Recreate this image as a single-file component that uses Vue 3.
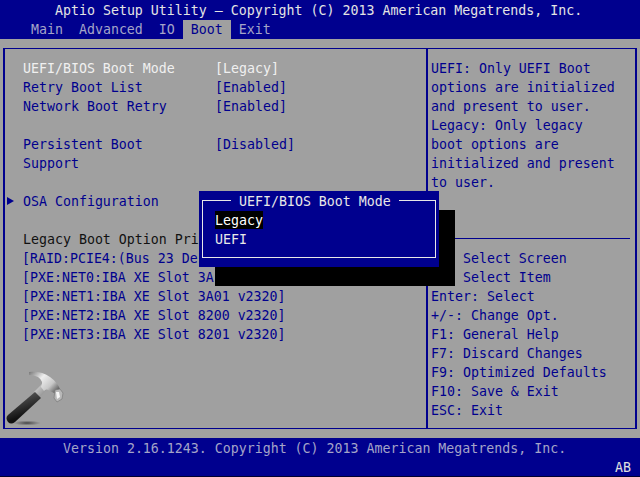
<script setup>
const tabs = ['Main', 'Advanced', 'IO', 'Boot', 'Exit']
const help = ['UEFI: Only UEFI Boot', 'options are initialized', 'and present to user.', 'Legacy: Only legacy', 'boot options are', 'initialized and present', 'to user.']
const keys = ['    Select Screen', '    Select Item', 'Enter: Select', '+/-: Change Opt.', 'F1: General Help', 'F7: Discard Changes', 'F9: Optimized Defaults', 'F10: Save & Exit', 'ESC: Exit']
const opts = ['[RAID:PCIE4:(Bus 23 De', '[PXE:NET0:IBA XE Slot 3A', '[PXE:NET1:IBA XE Slot 3A01 v2320]', '[PXE:NET2:IBA XE Slot 8200 v2320]', '[PXE:NET3:IBA XE Slot 8201 v2320]']
</script>

<template>
  <div class="screen">
    <header class="top">
      <div class="title">Aptio Setup Utility – Copyright (C) 2013 American Megatrends, Inc.</div>
      <nav class="tabs">
        <span v-for="t in tabs" :key="t" class="tab" :class="{ on: t === 'Boot' }">{{ t }}</span>
      </nav>
    </header>
    <main class="frame">
      <section class="left">
        <div class="row white"><span class="label">UEFI/BIOS Boot Mode</span><span>[Legacy]</span></div>
        <div class="row"><span class="label">Retry Boot List</span><span>[Enabled]</span></div>
        <div class="row"><span class="label">Network Boot Retry</span><span>[Enabled]</span></div>
        <div class="row gap"><span class="label">Persistent Boot</span><span>[Disabled]</span></div>
        <div class="row"><span class="label">Support</span></div>
        <div class="row gap arrowrow"><span class="arrow"></span><span class="label">OSA Configuration</span></div>
        <div class="row gap dark">Legacy Boot Option Pri</div>
        <div v-for="o in opts" :key="o" class="row opt">{{ o }}</div>
        <svg class="hammer" width="70" height="70" viewBox="0 0 70 70">
          <defs>
            <linearGradient id="steel" x1="0" y1="0" x2="1" y2="0.7">
              <stop offset="0" stop-color="#777"/>
              <stop offset="0.4" stop-color="#efefef"/>
              <stop offset="0.75" stop-color="#c8c8c8"/>
              <stop offset="1" stop-color="#666"/>
            </linearGradient>
            <linearGradient id="grip" x1="0.7" y1="0.1" x2="0.9" y2="0.6">
              <stop offset="0" stop-color="#4a4a4a"/>
              <stop offset="1" stop-color="#111"/>
            </linearGradient>
            <linearGradient id="neck" x1="0" y1="0" x2="1" y2="1">
              <stop offset="0" stop-color="#e4e4e4"/>
              <stop offset="1" stop-color="#777"/>
            </linearGradient>
            <radialGradient id="shade">
              <stop offset="0" stop-color="#2a2a2a" stop-opacity="0.8"/>
              <stop offset="1" stop-color="#444" stop-opacity="0"/>
            </radialGradient>
          </defs>
          <ellipse cx="27" cy="58" rx="14" ry="2.5" fill="url(#shade)"/>
          <path d="M43 18 L48 23 L39 33 L34 27 Z" fill="url(#neck)"/>
          <path d="M35 27 L41 33 L15 57 Q11 60 8 57 Q5 53 8 50 Z" fill="url(#grip)"/>
          <path d="M29 7 Q42 6 50 12 Q57 17 60 24 L56 29 L50 26 Q46 23 44 26 L41 22 Q44 16 38 12 Q34 10 29 10 Z" fill="url(#steel)"/>
          <path d="M55 25 L60 24 L63 28 L62 34 L57 37 L54 33 Z" fill="#b8b8b8" stroke="#7a7a7a" stroke-width="0.7"/>
          <path d="M56 27 L59 27 L60 32 L57 34 Z" fill="#f6f6f6"/>
        </svg>
      </section>
      <aside class="right">
        <div class="help"><div v-for="h in help" :key="h" class="line">{{ h }}</div></div>
        <div class="keys"><div v-for="k in keys" :key="k" class="line">{{ k }}</div></div>
      </aside>
    </main>
    <footer class="bottom">
      <div class="version">Version 2.16.1243. Copyright (C) 2013 American Megatrends, Inc.</div>
      <div class="ab">AB</div>
    </footer>
    <div class="dialog">
      <div class="box">
        <div class="legend">UEFI/BIOS Boot Mode</div>
        <div class="item sel">Legacy</div>
        <div class="item">UEFI</div>
      </div>
    </div>
  </div>
</template>

<style>
html, body { margin: 0; background: #a0a0a0; }
</style>

<style scoped>
.screen {
  position: relative;
  width: 640px;
  height: 477px;
  overflow: hidden;
  background: #a0a0a0;
  color: #00008e;
  font: 13.28px/19px "DejaVu Sans Mono", monospace;
  white-space: pre;
}
.top { height: 39px; background: #00008e; padding-top: 1px; box-sizing: border-box; }
.title { height: 19px; padding-left: 55px; color: #e4e4e4; }
.tabs { display: flex; padding-left: 23px; height: 19px; color: #a4a4c8; }
.tab { padding: 0 8px; }
.tab.on { background: #a0a0a0; color: #00008e; }
.frame {
  display: flex;
  box-sizing: border-box;
  width: 634px;
  height: 381px;
  margin: 9px 0 0 3px;
  border: solid #00008e;
  border-width: 1px 2px;
}
.left { position: relative; width: 423px; box-sizing: border-box; padding: 10px 0 0 18px; border-right: 2px solid #00008e; }
.row { display: flex; height: 19px; }
.label { width: 192px; }
.white { color: #f0f0f0; }
.gap { margin-top: 19px; }
.dark { color: #111; }
.opt { margin-left: -1px; }
.arrowrow { position: relative; }
.arrow { position: absolute; left: -16px; top: 5px; border-left: 7px solid #00008e; border-top: 4px solid transparent; border-bottom: 4px solid transparent; }
.hammer { position: absolute; left: -5px; top: 316px; }
.right { flex: 1; display: flex; flex-direction: column; }
.help { height: 190px; padding: 10px 0 0 3px; box-sizing: border-box; margin-right: 5px; border-bottom: 1px solid #00008e; }
.keys { padding: 10px 0 0 3px; }
.line { height: 19px; }
.bottom { position: relative; height: 39px; margin-top: 9px; background: #00008e; color: #a4a4c8; box-sizing: border-box; padding: 1px 0 0 63px; border-bottom: 1px solid #000030; }
.ab { position: absolute; right: 9px; top: 20px; color: #e0e0e0; }
.dialog {
  position: absolute;
  left: 199px;
  top: 191px;
  width: 240px;
  height: 76px;
  box-sizing: border-box;
  padding: 9px 3px;
  background: #00008e;
  box-shadow: 16px 19px 0 #000;
  color: #e8e8e8;
}
.box { position: relative; height: 58px; box-sizing: border-box; border: 1px solid #e8e8e8; padding: 10px 0 0 12px; }
.legend { position: absolute; left: 28px; top: -9px; height: 19px; padding: 0 8px; background: #00008e; }
.item { height: 19px; width: 48px; }
.sel { height: 18px; margin-bottom: 1px; background: #000; color: #fff; }
</style>
